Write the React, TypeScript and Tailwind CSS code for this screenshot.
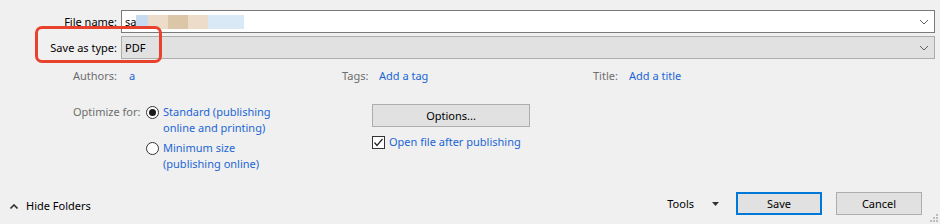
import React from 'react';

const font = "font-['Segoe_UI','Noto_Sans',sans-serif]";

function Chevron() {
  return (
    <svg width="10" height="6" viewBox="0 0 10 6" className="text-[#606060]">
      <path d="M1 1 L5 5 L9 1" fill="none" stroke="currentColor" strokeWidth="1" />
    </svg>
  );
}

function Radio({ checked }: { checked?: boolean }) {
  return (
    <span className="mt-[2px] flex h-[13px] w-[13px] shrink-0 items-center justify-center rounded-full border border-[#333] bg-white">
      {checked && <span className="h-[7px] w-[7px] rounded-full bg-[#1a1a1a]" />}
    </span>
  );
}

export default function App() {
  return (
    <div className={`relative flex h-[224px] w-[940px] flex-col overflow-hidden bg-[#f0f0f0] text-[11px] leading-[16px] text-black ${font}`}>
      {/* file name / type */}
      <div className="grid grid-cols-[121px_1fr] gap-y-[3px] pr-[5px] pt-[10px]">
        <div className="flex items-center justify-end pr-[4px]">File name:</div>
        <div className="flex h-[23px] items-center border border-[#7a7a7a] bg-white pl-[3px] pr-[5px]">
          <span>sa</span>
          <span className="flex h-[14px]">
            <span className="w-[12px] bg-[#c6dbef]" />
            <span className="w-[20px] bg-[#eddcc9]" />
            <span className="w-[20px] bg-[#dcc6a8]" />
            <span className="w-[20px] bg-[#eddcc9]" />
            <span className="w-[36px] bg-[#d9eaf6]" />
          </span>
          <span className="ml-auto">
            <Chevron />
          </span>
        </div>
        <div className="flex items-center justify-end pr-[4px]">Save as type:</div>
        <div className="flex h-[23px] items-center border border-[#adadad] bg-[#e1e1e1] pl-[3px] pr-[5px]">
          <span>PDF</span>
          <span className="ml-auto">
            <Chevron />
          </span>
        </div>
      </div>

      {/* metadata */}
      <div className="mt-[9px] flex pl-[73px]">
        <div className="flex w-[269px]">
          <span className="w-[56px] text-[#6d6d6d]">Authors:</span>
          <span className="text-[#1a66d4]">a</span>
        </div>
        <div className="flex w-[251px]">
          <span className="w-[37px] text-[#6d6d6d]">Tags:</span>
          <span className="text-[#1a66d4]">Add a tag</span>
        </div>
        <div className="flex">
          <span className="w-[36px] text-[#6d6d6d]">Title:</span>
          <span className="text-[#1a66d4]">Add a title</span>
        </div>
      </div>

      {/* options */}
      <div className="mt-[20px] flex pl-[73px]">
        <div className="flex w-[299px]">
          <span className="w-[73px] whitespace-nowrap text-[#6d6d6d]">Optimize for:</span>
          <div className="flex flex-col gap-[4px]">
            <label className="flex gap-[4px]">
              <Radio checked />
              <span className="text-[#1a66d4]">
                Standard (publishing
                <br />
                online and printing)
              </span>
            </label>
            <label className="flex gap-[4px]">
              <Radio />
              <span className="text-[#1a66d4]">
                Minimum size
                <br />
                (publishing online)
              </span>
            </label>
          </div>
        </div>
        <div className="flex flex-col">
          <button className="h-[23px] w-[158px] border border-[#adadad] bg-[#e1e1e1]">Options...</button>
          <label className="mt-[7px] flex items-center gap-[4px]">
            <span className="flex h-[13px] w-[13px] items-center justify-center border border-[#333] bg-white">
              <svg width="11" height="11" viewBox="0 0 11 11">
                <path d="M1.5 5.5 L4 8.5 L9.5 2" fill="none" stroke="#222" strokeWidth="1.2" />
              </svg>
            </span>
            <span className="text-[#1a66d4]">Open file after publishing</span>
          </label>
        </div>
      </div>

      {/* bottom bar */}
      <div className="mt-auto flex items-center pb-[9px] pr-[18px]">
        <div className="mt-[5px] flex items-center pl-[10px]">
          <svg width="8" height="5" viewBox="0 0 8 5">
            <path d="M0.5 4.5 L4 1 L7.5 4.5" fill="none" stroke="#333" strokeWidth="1.6" />
          </svg>
          <span className="ml-[8px]">Hide Folders</span>
        </div>
        <div className="ml-auto flex items-center">
          <span>Tools</span>
          <svg width="7" height="4" viewBox="0 0 7 4" className="ml-[18px]">
            <path d="M0 0 L7 0 L3.5 4 Z" fill="#333" />
          </svg>
          <button className="ml-[17px] h-[23px] w-[86px] border-2 border-[#0078d7] bg-[#e1e1e1]">Save</button>
          <button className="ml-[14px] h-[23px] w-[86px] border border-[#adadad] bg-[#e1e1e1]">Cancel</button>
        </div>
      </div>

      {/* size grip */}
      <svg width="8" height="8" viewBox="0 0 8 8" className="absolute bottom-[2px] right-[2px]">
        <rect x="6" y="0" width="2" height="2" fill="#bcbcbc" />
        <rect x="3" y="3" width="2" height="2" fill="#bcbcbc" />
        <rect x="6" y="3" width="2" height="2" fill="#bcbcbc" />
        <rect x="0" y="6" width="2" height="2" fill="#bcbcbc" />
        <rect x="3" y="6" width="2" height="2" fill="#bcbcbc" />
        <rect x="6" y="6" width="2" height="2" fill="#bcbcbc" />
      </svg>

      {/* red annotation box */}
      <div className="absolute left-[35px] top-[26px] h-[37px] w-[127px] rounded-[7px] border-[3px] border-[#e8412c]" />
    </div>
  );
}
